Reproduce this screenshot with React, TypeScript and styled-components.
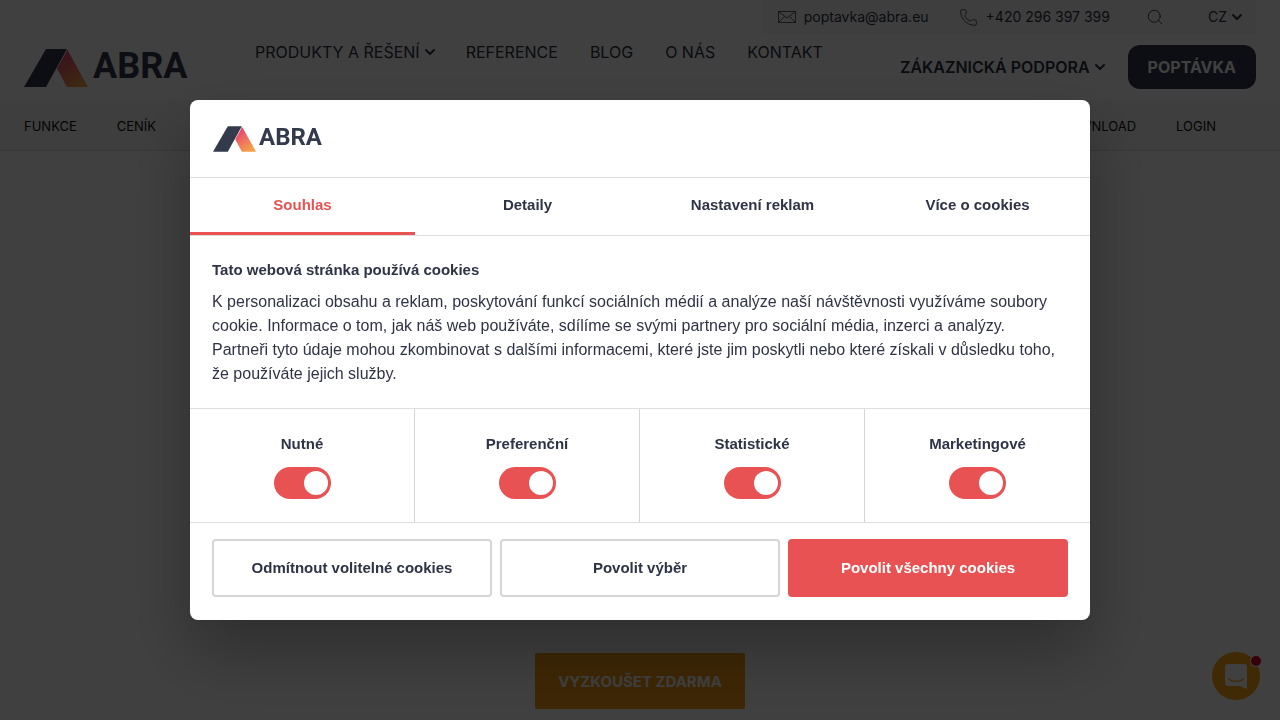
import React, { useId, useState } from 'react';
import styled, { createGlobalStyle } from 'styled-components';
import { ChevronDown, Phone, Search } from 'lucide-react';

const GlobalStyle = createGlobalStyle`
  *, *::before, *::after { box-sizing: border-box; }
  body { margin: 0; background: #fff; color: #2b3340; font-family: Inter, "Liberation Sans", sans-serif; }
  button, input { font: inherit; color: inherit; }
  a { color: inherit; text-decoration: none; }
`;

const Page = styled.div`
  display: flex;
  flex-direction: column;
  min-height: 100vh;
`;

const Header = styled.header`
  padding: 0 24px;
`;

const ContactBar = styled.div`
  display: flex;
  align-items: center;
  width: fit-content;
  height: 34px;
  margin-left: auto;
  padding: 0 15px;
  background: #f7f7f7;
  font-size: 14px;
  line-height: 20px;
`;

const ContactLink = styled.a`
  display: flex;
  align-items: center;
  gap: 8px;
  margin-right: 30px;
`;

const Chevron = styled(ChevronDown).attrs({ size: 16, strokeWidth: 3 })`
  margin: 0 -4px;
`;

const IconButton = styled.button`
  display: flex;
  align-items: center;
  gap: 6px;
  padding: 0;
  border: 0;
  background: none;
`;

const Tools = styled.div`
  display: flex;
  gap: 44px;
  margin-left: 6px;
`;

const MainRow = styled.div`
  display: flex;
  align-items: flex-start;
  height: 66px;
`;

const LogoLink = styled.a<{ $small?: boolean }>`
  display: flex;
  align-items: flex-start;
  gap: ${(p) => (p.$small ? 3 : 5)}px;
  width: fit-content;
  height: ${(p) => (p.$small ? 26 : 38)}px;
  color: #323a4b;
  font-family: Roboto, sans-serif;
  font-size: ${(p) => (p.$small ? 24 : 36)}px;
  font-weight: 700;
  line-height: ${(p) => (p.$small ? 22 : 34)}px;
`;

const LogoSlot = styled.div`
  width: 231px;
  padding-top: 15px;
`;

const MainNav = styled.nav`
  display: flex;
  gap: 32px;
  padding-top: 8px;
  font-size: 16px;
  line-height: 20px;
`;

const NavLink = styled.a`
  display: flex;
  align-items: center;
  gap: 6px;
`;

const Actions = styled.div`
  display: flex;
  align-items: center;
  gap: 24px;
  margin-left: auto;
  padding-top: 11px;
  font-size: 16px;
  font-weight: 600;
`;

const DemandLink = styled.a`
  display: flex;
  align-items: center;
  height: 44px;
  padding: 0 20px;
  border-radius: 12px;
  background: #303a4c;
  color: #fff;
  font-weight: 700;
`;

const SubNav = styled.nav`
  display: flex;
  gap: 40px;
  height: 51px;
  padding: 2px 64px 0 24px;
  align-items: center;
  border-bottom: 1px solid #ddd;
  background: #f7f7f7;
  color: #111;
  font-size: 13px;

  a:nth-child(3) { margin-left: auto; }
`;

const Hero = styled.main`
  display: flex;
  flex: 1;
  align-items: flex-end;
  justify-content: center;
  padding-bottom: 11px;
`;

const TrialLink = styled.a`
  display: grid;
  place-items: center;
  width: 210px;
  height: 56px;
  border-radius: 2px;
  background: #f59a14;
  color: #fff;
  font-size: 15px;
  font-weight: 700;
`;

const ChatButton = styled.button`
  position: fixed;
  right: 20px;
  bottom: 20px;
  display: grid;
  place-items: center;
  width: 48px;
  height: 48px;
  padding: 0;
  border: 0;
  border-radius: 50%;
  background: #ffa414;
`;

const ChatBadge = styled.span`
  position: absolute;
  top: 4px;
  right: -1px;
  width: 10px;
  height: 10px;
  border-radius: 50%;
  background: #d8002f;
  box-shadow: 0 0 0 1px #fff;
`;

const Overlay = styled.div`
  position: fixed;
  inset: 0;
  display: grid;
  place-items: center;
  padding: 16px;
  background: rgba(0, 0, 0, 0.75);
`;

const Dialog = styled.section`
  width: 100%;
  max-width: 900px;
  overflow: hidden;
  border-radius: 8px;
  background: #fff;
  box-shadow: 0 32px 68px rgba(0, 0, 0, 0.3);
  color: #2f3346;
  font-family: "Liberation Sans", Arial, sans-serif;
  font-size: 15px;
  line-height: 24px;
`;

const DialogHeader = styled.div`
  padding: 26px 22px 25px 23px;
  border-bottom: 1px solid #dedede;
`;

const Tabs = styled.div`
  display: grid;
  grid-template-columns: repeat(4, 1fr);
  border-bottom: 1px solid #dedede;
`;

const Tab = styled.button<{ $active: boolean }>`
  height: 57px;
  padding: 0 8px;
  border: 0;
  border-bottom: 3px solid ${(p) => (p.$active ? '#e85252' : 'transparent')};
  background: none;
  color: ${(p) => (p.$active ? '#e85252' : 'inherit')};
  font-weight: 700;
`;

const DialogBody = styled.div`
  padding: 22px 28px 22px 22px;

  h2 { margin: 0 0 8px; font-size: 15px; line-height: 24px; }
  p { margin: 0; font-size: 16px; }
`;

const Options = styled.div`
  display: grid;
  grid-template-columns: repeat(4, 1fr);
  border: solid #dedede;
  border-width: 1px 0;
`;

const Option = styled.label`
  display: flex;
  flex-direction: column;
  align-items: center;
  gap: 11px;
  padding: 23px 0;
  font-weight: 700;

  &:not(:last-child) { border-right: 1px solid #d6d6d6; }
`;

const Switch = styled.input`
  display: flex;
  align-items: center;
  appearance: none;
  width: 57px;
  height: 32px;
  margin: 0;
  padding: 0 3px;
  border-radius: 16px;
  background: #d6d6d6;

  &::before {
    content: "";
    width: 24px;
    height: 24px;
    border-radius: 50%;
    background: #fff;
  }
  &:checked { justify-content: flex-end; background: #e85252; }
`;

const DialogActions = styled.div`
  display: grid;
  grid-template-columns: repeat(3, 1fr);
  gap: 8px;
  padding: 16px 22px 23px;
`;

const DialogButton = styled.button<{ $primary?: boolean }>`
  height: 58px;
  border: 2px solid ${(p) => (p.$primary ? '#e85252' : '#d6d6d6')};
  border-radius: 4px;
  background: ${(p) => (p.$primary ? '#e85252' : '#fff')};
  color: ${(p) => (p.$primary ? '#fff' : 'inherit')};
  font-weight: 700;
`;

function Logo({ small }: { small?: boolean }) {
  const id = useId();
  return (
    <LogoLink href="#" $small={small}>
      <svg width={small ? 43 : 64} height={small ? 26 : 38} viewBox="0 0 64 38" aria-hidden="true">
        <defs>
          <linearGradient id={id} x1="0" y1="0" x2="0.6" y2="1">
            <stop offset="0.2" stopColor="#e8476f" />
            <stop offset="1" stopColor="#f5a04a" />
          </linearGradient>
        </defs>
        <path d="M0 38 22 0h21L22 38z" fill="#323a4b" />
        <path d="M43.500 1 64 38H43L33 19.500z" fill={`url(#${id})`} />
      </svg>
      ABRA
    </LogoLink>
  );
}

function MailIcon() {
  return (
    <svg width="18" height="12" viewBox="0 0 18 12" fill="none" stroke="currentColor" strokeWidth="0.8" aria-hidden="true">
      <path d="M.5.5h17v11H.5zM.5.5 9 7 17.500.5M.5 11.500l6-6M17.500 11.500l-6-6" />
    </svg>
  );
}

function ChatIcon() {
  return (
    <svg width="22" height="25" viewBox="0 0 22 25" aria-hidden="true">
      <path d="M3 0h16a3 3 0 0 1 3 3v22c-3-1-5-2-7-3H3a3 3 0 0 1-3-3V3a3 3 0 0 1 3-3z" fill="#fff" />
      <path d="M3.500 15c4 3.300 11 3.300 15 0" fill="none" stroke="#ffa414" strokeWidth="1.200" strokeLinecap="round" />
    </svg>
  );
}

const tabs = ['Souhlas', 'Detaily', 'Nastavení reklam', 'Více o cookies'];
const options = ['Nutné', 'Preferenční', 'Statistické', 'Marketingové'];

export default function App() {
  const [active, setActive] = useState(tabs[0]);
  return (
    <>
      <GlobalStyle />
      <Page>
        <Header>
          <ContactBar>
            <ContactLink href="mailto:poptavka@abra.eu"><MailIcon />poptavka@abra.eu</ContactLink>
            <ContactLink href="tel:+420296397399"><Phone size={19} strokeWidth={1} />+420 296 397 399</ContactLink>
            <Tools>
              <IconButton aria-label="Hledat"><Search size={18} strokeWidth={1.2} /></IconButton>
              <IconButton>CZ<Chevron /></IconButton>
            </Tools>
          </ContactBar>
          <MainRow>
            <LogoSlot><Logo /></LogoSlot>
            <MainNav>
              <NavLink href="#">PRODUKTY A ŘEŠENÍ<Chevron /></NavLink>
              <NavLink href="#">REFERENCE</NavLink>
              <NavLink href="#">BLOG</NavLink>
              <NavLink href="#">O NÁS</NavLink>
              <NavLink href="#">KONTAKT</NavLink>
            </MainNav>
            <Actions>
              <NavLink href="#">ZÁKAZNICKÁ PODPORA<Chevron /></NavLink>
              <DemandLink href="#">POPTÁVKA</DemandLink>
            </Actions>
          </MainRow>
        </Header>
        <SubNav>
          <a href="#">FUNKCE</a>
          <a href="#">CENÍK</a>
          <a href="#">DOWNLOAD</a>
          <a href="#">LOGIN</a>
        </SubNav>
        <Hero><TrialLink href="#">VYZKOUŠET ZDARMA</TrialLink></Hero>
      </Page>
      <ChatButton aria-label="Chat"><ChatIcon /><ChatBadge /></ChatButton>
      <Overlay>
        <Dialog role="dialog" aria-modal="true" aria-labelledby="consent-title">
          <DialogHeader><Logo small /></DialogHeader>
          <Tabs role="tablist">
            {tabs.map((t) => (
              <Tab key={t} role="tab" aria-selected={t === active} $active={t === active} onClick={() => setActive(t)}>{t}</Tab>
            ))}
          </Tabs>
          <DialogBody>
            <h2 id="consent-title">Tato webová stránka používá cookies</h2>
            <p>
              K personalizaci obsahu a reklam, poskytování funkcí sociálních médií a analýze naší návštěvnosti využíváme
              soubory cookie. Informace o tom, jak náš web používáte, sdílíme se svými partnery pro sociální média, inzerci
              a analýzy. Partneři tyto údaje mohou zkombinovat s dalšími informacemi, které jste jim poskytli nebo které
              získali v důsledku toho, že používáte jejich služby.
            </p>
          </DialogBody>
          <Options>
            {options.map((o) => (
              <Option key={o}>{o}<Switch type="checkbox" role="switch" defaultChecked /></Option>
            ))}
          </Options>
          <DialogActions>
            <DialogButton>Odmítnout volitelné cookies</DialogButton>
            <DialogButton>Povolit výběr</DialogButton>
            <DialogButton $primary>Povolit všechny cookies</DialogButton>
          </DialogActions>
        </Dialog>
      </Overlay>
    </>
  );
}
